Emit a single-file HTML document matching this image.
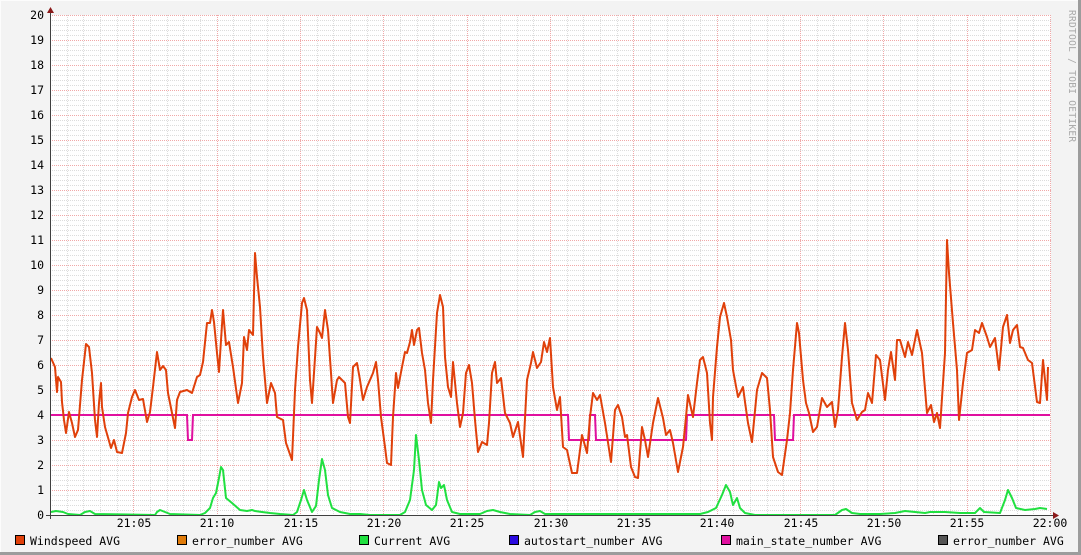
<!DOCTYPE html>
<html><head><meta charset="utf-8"><style>
html,body{margin:0;padding:0;}
body{width:1081px;height:555px;overflow:hidden;background:#f3f3f3;}
svg{display:block}
text{font-family:"DejaVu Sans Mono","Liberation Mono",monospace;font-size:11.5px;fill:#000}
</style></head><body>
<svg width="1081" height="555" viewBox="0 0 1081 555" xmlns="http://www.w3.org/2000/svg" shape-rendering="crispEdges">
<defs>
<pattern id="hmin" x="0" y="0" width="1000" height="5" patternUnits="userSpaceOnUse">
<line x1="0" y1="0.5" x2="1000" y2="0.5" stroke="#dcdcdc" stroke-dasharray="1,1"/>
</pattern>
<pattern id="hmaj" x="0" y="15" width="1000" height="25" patternUnits="userSpaceOnUse">
<line x1="0" y1="0.5" x2="1000" y2="0.5" stroke="#f0a8a8" stroke-dasharray="1,1"/>
</pattern>
</defs>
<rect x="0" y="0" width="1081" height="555" fill="#f3f3f3"/>
<line x1="0" y1="0.5" x2="1081" y2="0.5" stroke="#fcfcfc"/>
<line x1="0.5" y1="0" x2="0.5" y2="555" stroke="#fcfcfc"/>
<line x1="0" y1="553.5" x2="1081" y2="553.5" stroke="#9c9c9c" stroke-width="3"/>
<line x1="1079.5" y1="0" x2="1079.5" y2="555" stroke="#9c9c9c" stroke-width="3"/>
<rect x="51" y="15" width="1000" height="500" fill="#ffffff"/>
<rect x="51" y="15" width="1000" height="500" fill="url(#hmin)"/>
<path stroke="#dcdcdc" stroke-dasharray="1,1" fill="none" d="M67.5 15V515M83.5 15V515M100.5 15V515M117.5 15V515M150.5 15V515M167.5 15V515M183.5 15V515M200.5 15V515M233.5 15V515M250.5 15V515M267.5 15V515M283.5 15V515M317.5 15V515M333.5 15V515M350.5 15V515M367.5 15V515M400.5 15V515M417.5 15V515M433.5 15V515M450.5 15V515M483.5 15V515M500.5 15V515M517.5 15V515M533.5 15V515M567.5 15V515M583.5 15V515M600.5 15V515M617.5 15V515M650.5 15V515M667.5 15V515M683.5 15V515M700.5 15V515M733.5 15V515M750.5 15V515M767.5 15V515M783.5 15V515M817.5 15V515M833.5 15V515M850.5 15V515M867.5 15V515M900.5 15V515M917.5 15V515M933.5 15V515M950.5 15V515M983.5 15V515M1000.5 15V515M1017.5 15V515M1033.5 15V515"/>
<rect x="51" y="15" width="1000" height="500" fill="url(#hmaj)"/>
<path stroke="#f0a8a8" stroke-dasharray="1,1" fill="none" d="M133.5 15V515M217.5 15V515M300.5 15V515M383.5 15V515M467.5 15V515M550.5 15V515M633.5 15V515M717.5 15V515M800.5 15V515M883.5 15V515M967.5 15V515M1050.5 15V515"/>
<g text-anchor="end">
<text x="44" y="19">20</text><text x="44" y="44">19</text><text x="44" y="69">18</text><text x="44" y="94">17</text>
<text x="44" y="119">16</text><text x="44" y="144">15</text><text x="44" y="169">14</text><text x="44" y="194">13</text>
<text x="44" y="219">12</text><text x="44" y="244">11</text><text x="44" y="269">10</text><text x="44" y="294">9</text>
<text x="44" y="319">8</text><text x="44" y="344">7</text><text x="44" y="369">6</text><text x="44" y="394">5</text>
<text x="44" y="419">4</text><text x="44" y="444">3</text><text x="44" y="469">2</text><text x="44" y="494">1</text>
<text x="44" y="519">0</text>
</g>
<g text-anchor="middle">
<text x="134" y="527">21:05</text><text x="217" y="527">21:10</text><text x="301" y="527">21:15</text>
<text x="384" y="527">21:20</text><text x="467" y="527">21:25</text><text x="551" y="527">21:30</text>
<text x="634" y="527">21:35</text><text x="717" y="527">21:40</text><text x="801" y="527">21:45</text>
<text x="884" y="527">21:50</text><text x="967" y="527">21:55</text><text x="1050" y="527">22:00</text>
</g>
<g shape-rendering="auto">
<polyline fill="none" stroke="#20e040" stroke-width="2" stroke-linejoin="round" points="51,512 56,511 63,512 68,514 80,515 85,512 90,511 95,514 155,515 157,512 160,510 165,512 170,514 200,515 205,513 210,508 213,498 216,493 219,478 221,467 223,470 226,498 232,503 240,510 247,511 252,510 255,511 262,512 270,513 280,514 293,515 297,512 301,500 304,490 307,500 312,512 316,506 319,480 322,459 325,470 328,495 332,508 340,512 350,514 360,514 370,515 400,515 405,512 410,500 414,470 416,435 419,460 422,490 426,505 432,510 436,505 439,482 441,488 444,485 447,500 452,512 460,514 480,514 487,511 493,510 500,512 510,514 530,515 535,512 540,511 545,514 700,514 708,512 716,508 722,495 726,485 730,492 733,505 737,498 740,508 745,513 755,515 835,515 842,510 846,509 852,513 860,514 880,514 895,513 905,511 915,512 925,513 930,512 945,512 960,513 975,513 980,508 984,512 1000,513 1005,500 1008,490 1012,498 1016,508 1025,510 1035,509 1040,508 1047,509"/>
<polyline fill="none" stroke="#e0109f" stroke-width="2" points="51,415 187,415 188,440 192,440 193,415 568,415 569,440 589,440 590,415 595,415 596,440 686,440 687,415 774,415 775,440 793,440 794,415 1050,415"/>
<polyline fill="none" stroke="#e0400a" stroke-width="2" stroke-linejoin="round" points="51,358 55,367 57,392 58,377 61,382 62,402 64,420 66,433 69,412 72,423 75,437 78,430 82,380 86,344 89,347 92,373 95,420 97,437 99,403 101,383 102,407 105,427 111,448 114,440 117,452 122,453 126,433 128,413 132,397 135,390 139,400 143,399 147,422 150,412 153,387 157,352 160,370 163,366 166,370 168,393 172,413 175,428 177,400 180,392 187,390 192,393 197,377 200,375 203,362 207,323 210,323 212,310 214,322 217,353 219,372 221,340 223,310 226,345 229,342 233,367 238,403 242,383 244,337 247,350 249,330 253,335 255,253 257,277 260,307 263,357 267,403 271,383 275,393 277,417 283,420 286,443 292,460 295,390 298,347 302,303 304,298 307,310 310,380 312,403 314,373 317,327 320,333 322,338 325,310 328,330 331,373 333,403 337,380 339,377 345,383 348,417 350,423 353,367 357,363 360,380 363,400 367,387 373,373 376,362 378,380 381,417 385,447 387,463 391,465 393,417 396,373 398,388 402,367 405,352 407,353 410,342 412,330 414,345 417,330 419,328 422,353 425,370 428,403 431,423 433,380 437,313 440,295 443,307 445,357 448,387 451,397 453,362 457,403 460,427 463,413 466,373 469,365 472,383 475,420 478,452 482,442 487,445 489,423 492,373 495,362 497,383 501,378 505,413 510,423 513,437 518,422 523,457 527,380 531,363 533,352 537,368 541,362 544,342 547,352 550,338 553,387 557,410 560,397 563,447 567,450 572,473 577,473 582,435 587,453 590,417 593,393 597,400 600,395 605,423 611,462 615,410 618,405 622,417 625,437 627,435 631,467 635,477 638,478 642,427 645,440 648,457 653,423 658,398 663,418 666,435 670,430 673,443 678,472 683,447 686,417 688,395 693,417 697,383 700,360 703,357 707,373 710,423 712,440 713,397 717,347 720,317 724,303 727,317 731,340 733,370 738,397 743,387 745,402 748,423 752,442 757,390 762,373 767,378 770,410 773,457 778,472 782,475 787,440 790,413 793,370 797,323 799,333 803,380 806,403 809,413 813,432 817,427 822,398 827,407 832,402 835,427 838,410 842,357 845,323 848,350 852,403 857,420 862,412 865,410 868,393 872,403 876,355 880,360 885,400 888,370 891,352 895,380 897,340 900,340 905,357 908,342 912,355 917,330 922,353 927,413 931,405 934,422 937,413 940,428 945,353 947,240 949,273 953,323 957,370 959,420 963,383 967,353 972,350 975,330 979,333 982,323 987,337 990,347 995,338 999,370 1003,327 1007,315 1010,343 1013,330 1017,325 1020,347 1023,348 1028,360 1032,363 1037,402 1040,403 1043,360 1047,400 1048,367"/>
</g>
<line x1="46" y1="515.5" x2="1055" y2="515.5" stroke="#404040"/>
<line x1="50.5" y1="12" x2="50.5" y2="519" stroke="#404040"/>
<polygon points="47,13 54,13 50.5,7" fill="#8b1a1a" shape-rendering="auto"/>
<polygon points="1053,512 1053,519 1059,515.5" fill="#8b1a1a" shape-rendering="auto"/>
<text x="1069" y="10" transform="rotate(90 1069 10)" style="font-size:9.5px;fill:#aaaaaa;letter-spacing:0.3px">RRDTOOL / TOBI OETIKER</text>
<g stroke="#000" stroke-width="1">
<rect x="15.5" y="535.5" width="9" height="9" fill="#e0400a"/>
<rect x="177.5" y="535.5" width="9" height="9" fill="#e07b0a"/>
<rect x="359.5" y="535.5" width="9" height="9" fill="#20e040"/>
<rect x="509.5" y="535.5" width="9" height="9" fill="#2a0ae0"/>
<rect x="721.5" y="535.5" width="9" height="9" fill="#e0109f"/>
<rect x="938.5" y="535.5" width="9" height="9" fill="#555555"/>
</g>
<text x="30" y="545">Windspeed AVG</text>
<text x="192" y="545">error_number AVG</text>
<text x="374" y="545">Current AVG</text>
<text x="524" y="545">autostart_number AVG</text>
<text x="736" y="545">main_state_number AVG</text>
<text x="953" y="545">error_number AVG</text>
</svg>
</body></html>
